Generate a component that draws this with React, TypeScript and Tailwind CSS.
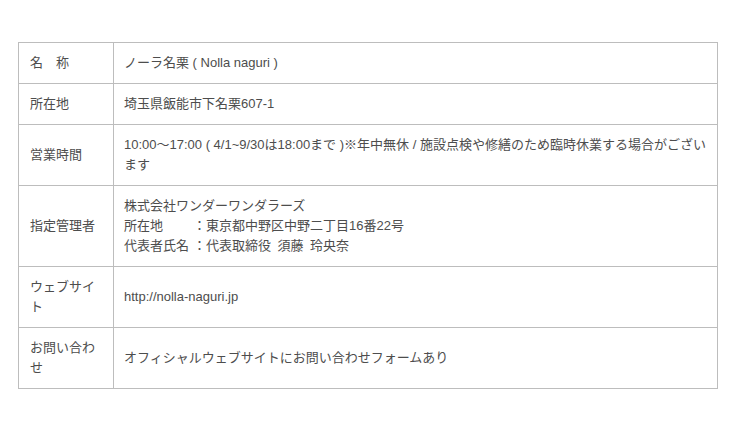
const rows: { label: string; value: React.ReactNode }[] = [
  { label: '名　称', value: 'ノーラ名栗 ( Nolla naguri )' },
  { label: '所在地', value: '埼玉県飯能市下名栗607-1' },
  {
    label: '営業時間',
    value:
      '10:00〜17:00 ( 4/1~9/30は18:00まで )※年中無休 / 施設点検や修繕のため臨時休業する場合がございます',
  },
  {
    label: '指定管理者',
    value: (
      <>
        <div>株式会社ワンダーワンダラーズ</div>
        <div className="flex">
          <span className="w-[69px] shrink-0">所在地</span>
          <span>：東京都中野区中野二丁目16番22号</span>
        </div>
        <div className="flex">
          <span className="w-[69px] shrink-0">代表者氏名</span>
          <span>：代表取締役&ensp;須藤&ensp;玲央奈</span>
        </div>
      </>
    ),
  },
  { label: 'ウェブサイト', value: 'http://nolla-naguri.jp' },
  { label: 'お問い合わせ', value: 'オフィシャルウェブサイトにお問い合わせフォームあり' },
];

export default function App() {
  return (
    <div
      className="w-[740px] h-[429px] bg-white pt-[42px] pl-[18px] text-[13px] leading-[20px] text-[#4d4d4d]"
      style={{ fontFamily: '"Liberation Sans", "Noto Sans CJK JP", sans-serif' }}
    >
      <table className="w-[700px] table-fixed border-collapse">
        <colgroup>
          <col className="w-[95px]" />
          <col />
        </colgroup>
        <tbody>
          {rows.map((row) => (
            <tr key={row.label}>
              <td className="border border-[#bdbdbd] pl-[11px] pr-[10px] py-[10px] align-middle">
                {row.label}
              </td>
              <td className="border border-[#bdbdbd] px-[10px] py-[10px] align-middle">
                {row.value}
              </td>
            </tr>
          ))}
        </tbody>
      </table>
    </div>
  );
}
